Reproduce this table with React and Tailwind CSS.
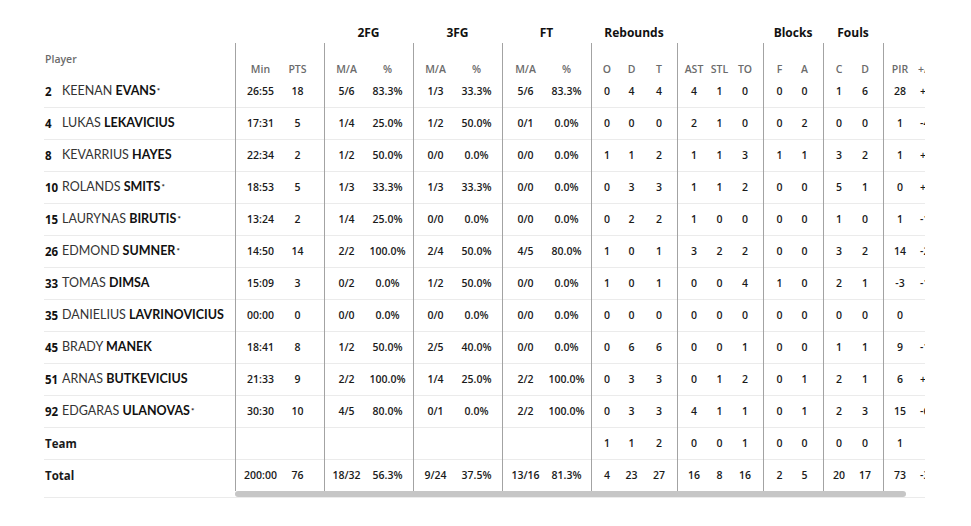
import React from "react";

// stat groups: width includes 1px left rule; cols are cell widths
const groups = [
  { label: "", w: "w-[89px]", pl: "pl-[6px]", cols: ["w-[37px]", "w-[37px]"], heads: ["Min", "PTS"] },
  { label: "2FG", w: "w-[89px]", pl: "pl-[1px]", cols: ["w-[41px]", "w-[41px]"], heads: ["M/A", "%"] },
  { label: "3FG", w: "w-[89px]", pl: "pl-[1px]", cols: ["w-[41px]", "w-[41px]"], heads: ["M/A", "%"] },
  { label: "FT", w: "w-[89px]", pl: "pl-[2px]", cols: ["w-[41px]", "w-[41px]"], heads: ["M/A", "%"] },
  { label: "Rebounds", w: "w-[86px]", pl: "pl-[3px]", cols: ["w-[24px]", "w-[25px]", "w-[30px]"], heads: ["O", "D", "T"] },
  { label: "", w: "w-[86px]", pl: "pl-[3px]", cols: ["w-[26px]", "w-[25px]", "w-[26px]"], heads: ["AST", "STL", "TO"] },
  { label: "Blocks", w: "w-[60px]", pl: "pl-[3px]", cols: ["w-[25px]", "w-[25px]"], heads: ["F", "A"] },
  { label: "Fouls", w: "w-[60px]", pl: "pl-[2px]", cols: ["w-[26px]", "w-[26px]"], heads: ["C", "D"] },
  { label: "", w: "w-[90px]", pl: "pl-0", cols: ["w-[32px]", "w-[40px]"], heads: ["PIR", "+/-"] },
];

const players = [
  { no: "2", first: "KEENAN", last: "EVANS", star: true, s: ["26:55", "18", "5/6", "83.3%", "1/3", "33.3%", "5/6", "83.3%", "0", "4", "4", "4", "1", "0", "0", "0", "1", "6", "28", "+9"] },
  { no: "4", first: "LUKAS", last: "LEKAVICIUS", s: ["17:31", "5", "1/4", "25.0%", "1/2", "50.0%", "0/1", "0.0%", "0", "0", "0", "2", "1", "0", "0", "2", "0", "0", "1", "-4"] },
  { no: "8", first: "KEVARRIUS", last: "HAYES", s: ["22:34", "2", "1/2", "50.0%", "0/0", "0.0%", "0/0", "0.0%", "1", "1", "2", "1", "1", "3", "1", "1", "3", "2", "1", "+3"] },
  { no: "10", first: "ROLANDS", last: "SMITS", star: true, s: ["18:53", "5", "1/3", "33.3%", "1/3", "33.3%", "0/0", "0.0%", "0", "3", "3", "1", "1", "2", "0", "0", "5", "1", "0", "+6"] },
  { no: "15", first: "LAURYNAS", last: "BIRUTIS", star: true, s: ["13:24", "2", "1/4", "25.0%", "0/0", "0.0%", "0/0", "0.0%", "0", "2", "2", "1", "0", "0", "0", "0", "1", "0", "1", "-12"] },
  { no: "26", first: "EDMOND", last: "SUMNER", star: true, s: ["14:50", "14", "2/2", "100.0%", "2/4", "50.0%", "4/5", "80.0%", "1", "0", "1", "3", "2", "2", "0", "0", "3", "2", "14", "-2"] },
  { no: "33", first: "TOMAS", last: "DIMSA", s: ["15:09", "3", "0/2", "0.0%", "1/2", "50.0%", "0/0", "0.0%", "1", "0", "1", "0", "0", "4", "1", "0", "2", "1", "-3", "-13"] },
  { no: "35", first: "DANIELIUS", last: "LAVRINOVICIUS", s: ["00:00", "0", "0/0", "0.0%", "0/0", "0.0%", "0/0", "0.0%", "0", "0", "0", "0", "0", "0", "0", "0", "0", "0", "0", ""] },
  { no: "45", first: "BRADY", last: "MANEK", s: ["18:41", "8", "1/2", "50.0%", "2/5", "40.0%", "0/0", "0.0%", "0", "6", "6", "0", "0", "1", "0", "0", "1", "1", "9", "-11"] },
  { no: "51", first: "ARNAS", last: "BUTKEVICIUS", s: ["21:33", "9", "2/2", "100.0%", "1/4", "25.0%", "2/2", "100.0%", "0", "3", "3", "0", "1", "2", "0", "1", "2", "1", "6", "+8"] },
  { no: "92", first: "EDGARAS", last: "ULANOVAS", star: true, s: ["30:30", "10", "4/5", "80.0%", "0/1", "0.0%", "2/2", "100.0%", "0", "3", "3", "4", "1", "1", "0", "1", "2", "3", "15", "-6"] },
];

const team = ["", "", "", "", "", "", "", "", "1", "1", "2", "0", "0", "1", "0", "0", "0", "0", "1", ""];
const total = ["200:00", "76", "18/32", "56.3%", "9/24", "37.5%", "13/16", "81.3%", "4", "23", "27", "16", "8", "16", "2", "5", "20", "17", "73", "-30"];

const nameFont = { fontFamily: "Lato, 'Open Sans', sans-serif" };
const numFont = { fontFamily: "'Open Sans', sans-serif" };

function StatRow({ values, first, height }) {
  let idx = 0;
  return (
    <div className={`flex ${height}`}>
      {groups.map((g, gi) => (
        <div key={gi} className={`${g.w} shrink-0 border-l border-[#a3a3a3]`}>
          <div className={`h-full flex items-center ${g.pl} ${first ? "" : "border-t border-[#ebebeb]"}`}>
            {g.cols.map((c, ci) => {
              const v = values[idx++];
              const last = gi === groups.length - 1 && ci === 1;
              return (
                <div key={ci} className={`${c} shrink-0 ${last ? "text-left pl-[4px]" : "text-center"} whitespace-nowrap`}>
                  {v}
                </div>
              );
            })}
          </div>
        </div>
      ))}
    </div>
  );
}

export default function App() {
  return (
    <div
      className="w-[971px] h-[526px] bg-white pt-[18px] pl-[44px] text-[#1a1a1a]"
      style={{ fontFamily: "'Open Sans', sans-serif" }}
    >
      <div className="flex w-[881px] border-b border-[#ebebeb]">
        {/* player column */}
        <div className="w-[191px] shrink-0">
          <div className="h-[58px] pt-[33px] pl-[1px] text-[10.5px] leading-[16px] font-semibold text-[#6b6b6b]">
            Player
          </div>
          {players.map((p, i) => (
            <div
              key={p.no}
              className={`flex items-center pl-[1px] ${i === 0 ? "h-[31px]" : "h-[32px] border-t border-[#ebebeb]"} text-[12.5px] whitespace-nowrap`}
              style={nameFont}
            >
              <span className="w-[17px] shrink-0 text-[11.5px] font-bold text-[#111]" style={numFont}>{p.no}</span>
              <span className="text-[#333] font-normal">{p.first}&nbsp;</span>
              <span className="font-bold text-[#111]">{p.last}</span>
              {p.star && <span className="text-[8px] font-bold self-start mt-[9px] ml-[1px]">*</span>}
            </div>
          ))}
          <div className="h-[32px] flex items-center pl-[1px] border-t border-[#ebebeb] text-[11.5px] font-bold">Team</div>
          <div className="h-[32px] flex items-center pl-[1px] border-t border-[#ebebeb] text-[11.5px] font-bold">Total</div>
          <div className="h-[6px]" />
        </div>

        {/* scrolling stats */}
        <div className="w-[690px] shrink-0 overflow-hidden">
          <div className="w-[800px]">
            <div className="flex h-[25px] pt-[5px] items-center">
              {groups.map((g, gi) => (
                <div key={gi} className={`${g.w} shrink-0 text-center text-[12px] font-bold text-[#111]`}>
                  {g.label}
                </div>
              ))}
            </div>
            <div className="flex h-[33px]">
              {groups.map((g, gi) => (
                <div key={gi} className={`${g.w} shrink-0 border-l border-[#a3a3a3] flex items-end ${g.pl}`}>
                  {g.cols.map((c, ci) => {
                    const last = gi === groups.length - 1 && ci === 1;
                    return (
                      <div
                        key={ci}
                        className={`${c} shrink-0 ${last ? "text-left pl-[2px]" : "text-center"} text-[10.5px] leading-[13px] font-semibold text-[#6b6b6b]`}
                      >
                        {g.heads[ci]}
                      </div>
                    );
                  })}
                </div>
              ))}
            </div>
            <div className="text-[10.5px] font-semibold">
              {players.map((p, i) => (
                <StatRow key={p.no} values={p.s} first={i === 0} height={i === 0 ? "h-[31px]" : "h-[32px]"} />
              ))}
              <StatRow values={team} height="h-[32px]" />
              <StatRow values={total} height="h-[32px]" />
            </div>
          </div>
          <div className="h-[6px] relative">
            <div className="absolute left-0 top-0 h-[6px] w-[671px] rounded-full bg-[#c6c6c6]" />
          </div>
        </div>
      </div>
    </div>
  );
}
